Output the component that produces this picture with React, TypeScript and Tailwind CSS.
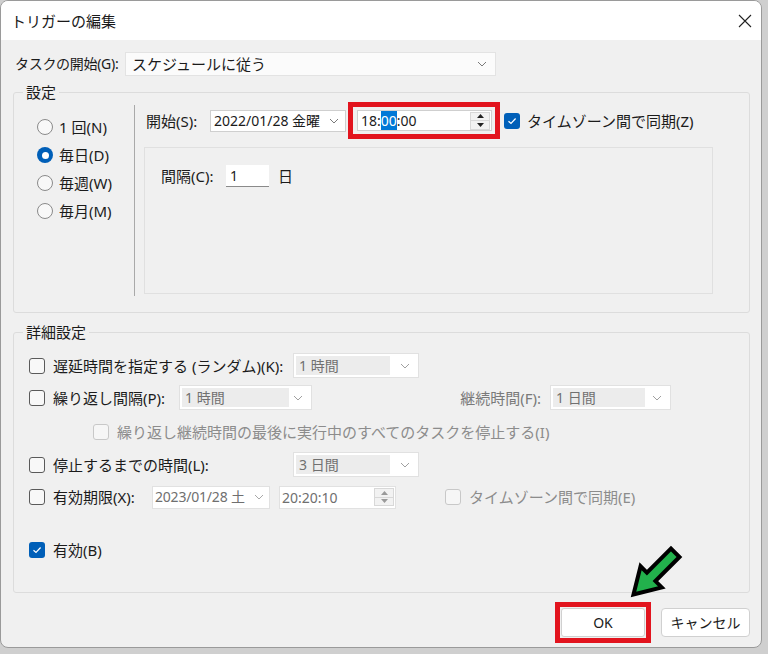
import React from "react";

const Chevron = ({ color = "#7a7a7a" }: { color?: string }) => (
  <svg width="10" height="6" viewBox="0 0 10 6" className="shrink-0">
    <path d="M1 1 L5 5 L9 1" fill="none" stroke={color} strokeWidth="1" />
  </svg>
);

const CheckMark = () => (
  <svg width="10" height="8" viewBox="0 0 10 8">
    <path d="M1.5 4.2 L4 6.5 L8.6 1.5" fill="none" stroke="#fff" strokeWidth="1.2" />
  </svg>
);

function Box({ checked, disabled }: { checked?: boolean; disabled?: boolean }) {
  if (checked) {
    return (
      <span className="w-[16px] h-[16px] shrink-0 rounded-[3px] bg-[#005fb8] flex items-center justify-center">
        <CheckMark />
      </span>
    );
  }
  return (
    <span
      className={
        disabled
          ? "w-[16px] h-[16px] shrink-0 rounded-[3px] border border-[#c8c8c8] bg-[#f6f6f6]"
          : "w-[16px] h-[16px] shrink-0 rounded-[3px] border border-[#5a5a5a] bg-[#f8f8f8]"
      }
    />
  );
}

function Radio({ checked }: { checked?: boolean }) {
  if (checked) {
    return (
      <span className="w-[16px] h-[16px] shrink-0 rounded-full bg-[#005fb8] flex items-center justify-center">
        <span className="w-[7px] h-[7px] rounded-full bg-white" />
      </span>
    );
  }
  return <span className="w-[16px] h-[16px] shrink-0 rounded-full border border-[#8a8a8a] bg-[#f8f8f8]" />;
}

function GreyCombo({ text, width, inner }: { text: string; width: string; inner: string }) {
  return (
    <div className={`${width} h-[25px] shrink-0 bg-white border border-[#e1e1e1] flex items-center pl-[2px] pr-[8px]`}>
      <div className={`${inner} h-[19px] bg-[#ececec] text-[#707070] pl-[3px] leading-[19px] text-[14px] whitespace-nowrap`}>
        {text}
      </div>
      <div className="flex-1" />
      <Chevron color="#a0a0a0" />
    </div>
  );
}

const Spin = ({ color }: { color: string }) => (
  <div className="flex flex-col w-[20px] h-[18px] shrink-0 border border-[#d8d8d8] bg-[#f2f2f2]">
    <div className="flex-1 flex items-center justify-center border-b border-[#d8d8d8]">
      <svg width="7" height="4" viewBox="0 0 7 4">
        <path d="M0 4 L3.5 0 L7 4 Z" fill={color} />
      </svg>
    </div>
    <div className="flex-1 flex items-center justify-center">
      <svg width="7" height="4" viewBox="0 0 7 4">
        <path d="M0 0 L3.5 4 L7 0 Z" fill={color} />
      </svg>
    </div>
  </div>
);

export default function App() {
  return (
    <div className="w-[768px] h-[654px] bg-[#cfcfcf] overflow-hidden relative whitespace-nowrap font-['Noto_Sans','Noto_Sans_CJK_JP',sans-serif] text-[15px] text-[#1b1b1b]">
      <div className="w-[762px] h-[648px] rounded-[8px] border border-[#9a9a9a] bg-[#f0f0f0] overflow-hidden flex flex-col">
        {/* title bar */}
        <div className="h-[39px] shrink-0 bg-white flex items-center justify-between pl-[10px] pr-[9px]">
          <span className="text-[15px] leading-[20px] text-[#1a1a1a]">トリガーの編集</span>
          <svg width="14" height="14" viewBox="0 0 14 14">
            <path d="M1 1 L13 13 M13 1 L1 13" stroke="#222" strokeWidth="1.1" />
          </svg>
        </div>

        {/* body */}
        <div className="flex-1 flex flex-col pl-[12px] pr-[11px]">
          <div className="flex items-center pt-[12px]">
            <span className="w-[112px] pl-[2px] leading-[20px] text-[14px] tracking-[-0.3px]">タスクの開始(G):</span>
            <div className="w-[371px] h-[24px] bg-[#fbfbfb] border border-[#e3e3e3] flex items-center pl-[6px] pr-[8px]">
              <span className="flex-1 leading-[20px]">スケジュールに従う</span>
              <Chevron />
            </div>
          </div>

          {/* 設定 */}
          <fieldset className="mt-[6px] h-[231px] border border-[#dcdcdc] rounded-[3px] flex">
            <legend className="ml-[9px] px-[3px] leading-[20px]">設定</legend>
            <div className="flex w-full">
              <div className="w-[120px] pt-[11px] pl-[23px] flex flex-col">
                {[
                  ["1 回(N)", false],
                  ["毎日(D)", true],
                  ["毎週(W)", false],
                  ["毎月(M)", false],
                ].map(([label, on]) => (
                  <div key={label as string} className="h-[28px] flex items-center gap-[6px]">
                    <Radio checked={on as boolean} />
                    <span className="leading-[20px]">{label as string}</span>
                  </div>
                ))}
              </div>
              <div className="w-[1px] h-[191px] mt-[3px] bg-[#a9a9a9]" />
              <div className="flex flex-col">
                <div className="flex items-center pl-[11px]">
                  <span className="w-[64px] leading-[20px]">開始(S):</span>
                  <div className="w-[136px] h-[22px] bg-white border border-[#cfcfcf] flex items-center pl-[3px] pr-[6px]">
                    <span className="flex-1 leading-[20px] text-[14px]">2022/01/28 金曜</span>
                    <Chevron />
                  </div>
                  <div className="ml-[2px] border-[5px] border-[#e2141e] pl-[4px] pr-[3px] py-[3px]">
                    <div className="w-[135px] h-[21px] bg-white border border-[#cfcfcf] flex items-center pl-[3px] pr-[1px]">
                      <span className="flex-1 leading-[19px] text-[14px]">
                        18:<span className="bg-[#0078d7] text-white">00</span>:00
                      </span>
                      <Spin color="#222" />
                    </div>
                  </div>
                  <div className="ml-[4px] flex items-center gap-[7px]">
                    <Box checked />
                    <span className="leading-[20px]">タイムゾーン間で同期(Z)</span>
                  </div>
                </div>
                <div className="ml-[9px] mt-[8px] w-[569px] h-[147px] border border-[#e0e0e0] bg-[#f0f0f0] pl-[16px] pt-[17px]">
                  <div className="flex items-center">
                    <span className="w-[65px] leading-[20px]">間隔(C):</span>
                    <div className="w-[43px] h-[22px] bg-white border-b border-[#8a8a8a] pl-[4px] leading-[21px] text-[14px]">1</div>
                    <span className="ml-[9px] leading-[20px]">日</span>
                  </div>
                </div>
              </div>
            </div>
          </fieldset>

          {/* 詳細設定 */}
          <fieldset className="mt-[9px] h-[271px] border border-[#dcdcdc] rounded-[3px]">
            <legend className="ml-[9px] px-[3px] leading-[20px]">詳細設定</legend>
            <div className="flex flex-col">
              <div className="mt-[11px] h-[25px] flex items-center pl-[15px]">
                <Box />
                <span className="ml-[8px] w-[240px] leading-[20px]">遅延時間を指定する (ランダム)(K):</span>
                <GreyCombo text="1 時間" width="w-[126px]" inner="w-[94px]" />
              </div>
              <div className="mt-[7px] h-[25px] flex items-center pl-[15px]">
                <Box />
                <span className="ml-[8px] w-[126px] leading-[20px]">繰り返し間隔(P):</span>
                <GreyCombo text="1 時間" width="w-[133px]" inner="w-[107px]" />
                <span className="w-[229px] text-right text-[#7a7a7a] leading-[20px]">継続時間(F):</span>
                <div className="ml-[9px]">
                  <GreyCombo text="1 日間" width="w-[121px]" inner="w-[92px]" />
                </div>
              </div>
              <div className="mt-[10px] h-[24px] flex items-center pl-[79px]">
                <Box disabled />
                <span className="ml-[8px] text-[#8c8c8c] leading-[20px]">
                  繰り返し継続時間の最後に実行中のすべてのタスクを停止する(I)
                </span>
              </div>
              <div className="mt-[8px] h-[25px] flex items-center pl-[15px]">
                <Box />
                <span className="ml-[8px] w-[240px] leading-[20px]">停止するまでの時間(L):</span>
                <GreyCombo text="3 日間" width="w-[126px]" inner="w-[94px]" />
              </div>
              <div className="mt-[8px] h-[24px] flex items-center pl-[15px]">
                <Box />
                <span className="ml-[8px] w-[99px] leading-[20px]">有効期限(X):</span>
                <div className="w-[118px] h-[23px] bg-white border border-[#e1e1e1] flex items-center pl-[2px] pr-[5px] text-[#6f6f6f]">
                  <span className="flex-1 leading-[20px] text-[14px] tracking-[-0.2px]">2023/01/28 土</span>
                  <Chevron color="#a8a8a8" />
                </div>
                <div className="ml-[9px] w-[117px] h-[23px] bg-white border border-[#e1e1e1] flex items-center pl-[2px] pr-[1px] text-[#6f6f6f]">
                  <span className="flex-1 leading-[19px] text-[14px]">20:20:10</span>
                  <Spin color="#9a9a9a" />
                </div>
                <div className="ml-[49px] flex items-center">
                  <Box disabled />
                  <span className="ml-[8px] text-[#8c8c8c] leading-[20px]">タイムゾーン間で同期(E)</span>
                </div>
              </div>
              <div className="mt-[31px] h-[20px] flex items-center pl-[15px]">
                <Box checked />
                <span className="ml-[8px] leading-[20px]">有効(B)</span>
              </div>
            </div>
          </fieldset>

          {/* buttons */}
          <div className="mt-[9px] flex items-center justify-end">
            <div className="border-[5px] border-[#e2141e] p-[1px]">
              <div className="w-[84px] h-[29px] bg-white rounded-[3px] border border-[#d0d0d0] flex items-center justify-center text-[14px]">
                OK
              </div>
            </div>
            <div className="ml-[10px] w-[89px] h-[29px] bg-white rounded-[4px] border border-[#d0d0d0] flex items-center justify-center text-[14px]">
              キャンセル
            </div>
          </div>
        </div>
      </div>

      {/* annotation arrow */}
      <svg className="absolute left-[620px] top-[538px]" width="70" height="70" viewBox="0 0 70 70">
        <g transform="translate(34 36) rotate(135) translate(-30 0)">
          <polygon
            points="0,-6 34,-6 34,-15 59,0 34,15 34,6 0,6"
            fill="#22b14c"
            stroke="#000"
            strokeWidth="4"
            strokeLinejoin="miter"
          />
        </g>
      </svg>
    </div>
  );
}
